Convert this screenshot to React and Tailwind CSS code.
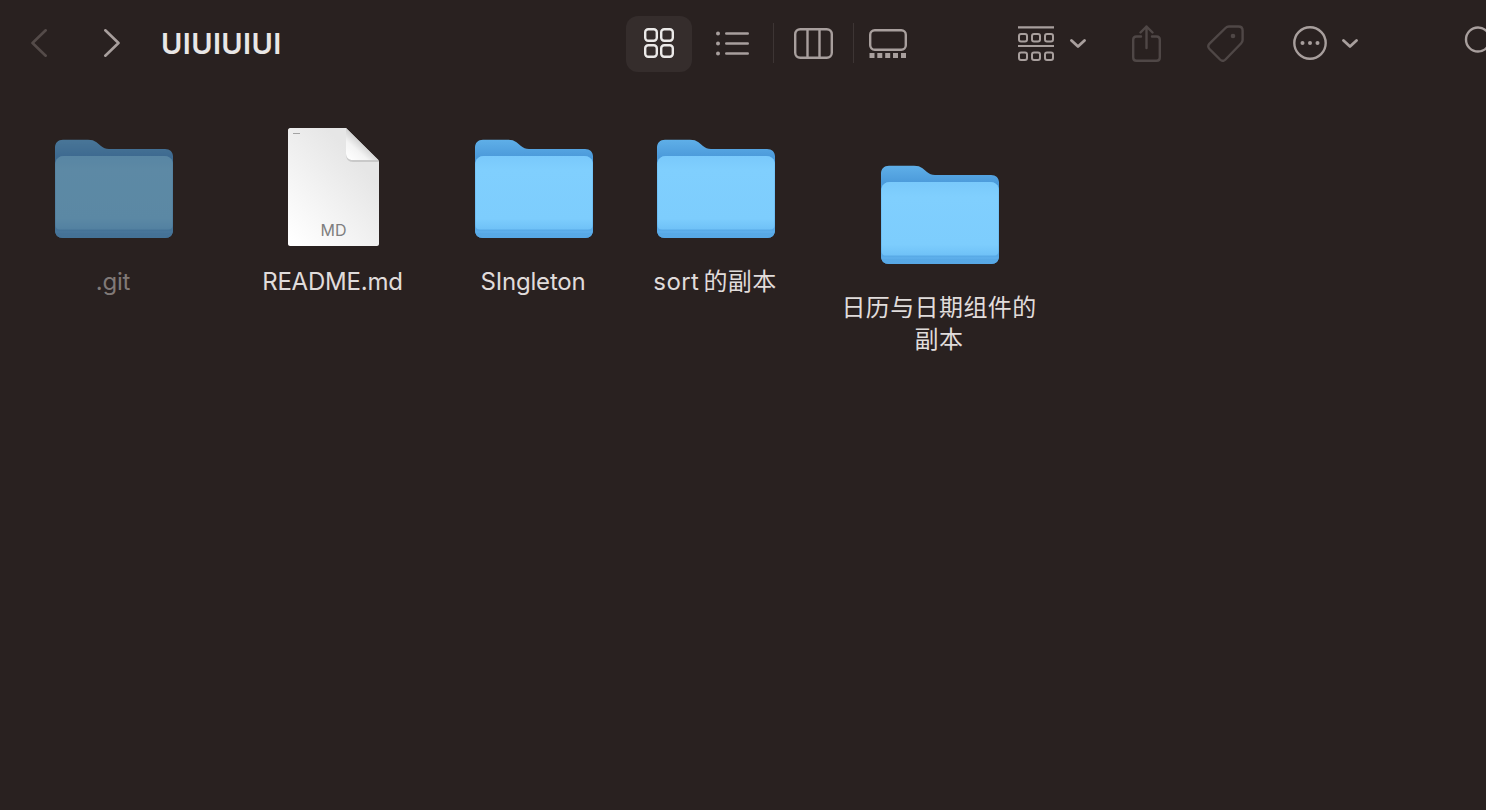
const dim = "#4f4746";
const mid = "#a89f9d";

const Folder = ({ uid, className = "" }) => (
  <svg width="118" height="99" viewBox="0 0 118 99" className={className}>
    <defs>
      <linearGradient id={`back-${uid}`} x1="0" y1="0" x2="0" y2="1">
        <stop offset="0" stopColor="#5fafe8" />
        <stop offset="0.17" stopColor="#4c9bdb" />
        <stop offset="1" stopColor="#4a98d9" />
      </linearGradient>
      <linearGradient id={`bottom-${uid}`} x1="0" y1="0" x2="0" y2="1">
        <stop offset="0" stopColor="#6cbff6" />
        <stop offset="1" stopColor="#57a8e5" />
      </linearGradient>
      <linearGradient id={`front-${uid}`} x1="0" y1="0" x2="0" y2="1">
        <stop offset="0" stopColor="#79c9fb" />
        <stop offset="0.2" stopColor="#80cffe" />
        <stop offset="0.85" stopColor="#7dcdfd" />
        <stop offset="1" stopColor="#6fc1f7" />
      </linearGradient>
    </defs>
    <path
      d="M8 0.700H33C37 0.700 39 1.500 41.500 3.200L46 7C48.500 9 50.500 10 54 10H110C115 10 118 13 118 17.500V91C118 96 115 99 110 99H8C3 99 0 96 0 91V8.700C0 3.700 3 0.700 8 0.700Z"
      fill={`url(#back-${uid})`}
    />
    <path
      d="M9 17H109C114 17 118 20 118 25V91C118 96 115 99 110 99H8C3 99 0 96 0 91V25C1 20 4 17 9 17Z"
      fill={`url(#bottom-${uid})`}
    />
    <path
      d="M9 17H109C114 17 117.500 20 117.500 25V86C117.500 89 116 90.500 113 90.500H5C2 90.500 0.500 89 0.500 86V25C0.500 20 4 17 9 17Z"
      fill={`url(#front-${uid})`}
    />
    <path d="M0.500 92.500H117.500V93.500H0.500Z" fill="#74c5fb" opacity="0.35" />
  </svg>
);

const FileIcon = () => (
  <div className="relative w-[91px] h-[118px]">
    <svg width="91" height="118" viewBox="0 0 91 118">
      <defs>
        <linearGradient id="page" x1="10" y1="118" x2="85" y2="50" gradientUnits="userSpaceOnUse">
          <stop offset="0" stopColor="#ffffff" />
          <stop offset="1" stopColor="#e6e6e6" />
        </linearGradient>
        <linearGradient id="fold" x1="60" y1="32" x2="76" y2="14" gradientUnits="userSpaceOnUse">
          <stop offset="0" stopColor="#ffffff" />
          <stop offset="0.55" stopColor="#f4f4f4" />
          <stop offset="1" stopColor="#cbcbcb" />
        </linearGradient>
      </defs>
      <path
        d="M2 0H58L91 33V116C91 117 90 118 89 118H2C1 118 0 117 0 116V2C0 1 1 0 2 0Z"
        fill="url(#page)"
      />
      <path d="M58 26C58 31 60.500 34 65 34H91V33L89 31.500H65C61 31.500 59 29 59 25Z" fill="#c9c9c9" />
      <path d="M58 0L90.500 32H65C60.500 32 58 29.500 58 25Z" fill="url(#fold)" />
      <rect x="5" y="5" width="7" height="1" fill="#a3a3a3" />
    </svg>
    <span className="absolute left-0 right-0 bottom-[7px] text-center text-[16px] leading-[18px] text-[#7f7f7f] font-['Inter',sans-serif]">
      MD
    </span>
  </div>
);

const Chevron = ({ dir, color }) => (
  <svg width="16" height="28" viewBox="0 0 16 28" fill="none" stroke={color} strokeWidth="2.600" strokeLinecap="round" strokeLinejoin="round">
    <path d={dir === "left" ? "M14.700 1.300L1.500 14L14.700 26.700" : "M1.300 1.300L14.500 14L1.300 26.700"} />
  </svg>
);

const SmallChevron = () => (
  <svg width="16" height="9" viewBox="0 0 16 9" fill="none" stroke={mid} strokeWidth="2.800" strokeLinecap="round" strokeLinejoin="round">
    <path d="M1.500 1.500L8 7.500L14.500 1.500" />
  </svg>
);

const Separator = ({ className }) => <div className={`w-[1px] h-[40px] bg-[#3d3534] ${className}`} />;

const GridIcon = () => (
  <svg width="30" height="30" viewBox="0 0 30 30" fill="none" stroke="#ebe9e8" strokeWidth="2.400">
    <rect x="1.200" y="1.200" width="11.600" height="11.600" rx="3" />
    <rect x="17.200" y="1.200" width="11.600" height="11.600" rx="3" />
    <rect x="1.200" y="17.200" width="11.600" height="11.600" rx="3" />
    <rect x="17.200" y="17.200" width="11.600" height="11.600" rx="3" />
  </svg>
);

const ListIcon = () => (
  <svg width="33" height="25" viewBox="0 0 33 25" fill={mid}>
    <circle cx="2" cy="2.500" r="2" />
    <circle cx="2" cy="12.500" r="2" />
    <circle cx="2" cy="22.500" r="2" />
    <rect x="9" y="1.200" width="24" height="2.600" rx="1.300" />
    <rect x="9" y="11.200" width="24" height="2.600" rx="1.300" />
    <rect x="9" y="21.200" width="24" height="2.600" rx="1.300" />
  </svg>
);

const ColumnsIcon = () => (
  <svg width="39" height="31" viewBox="0 0 39 31" fill="none" stroke={mid} strokeWidth="2.400">
    <rect x="1.200" y="1.200" width="36.600" height="28.600" rx="5" />
    <path d="M13.500 1.200V29.800M25.500 1.200V29.800" />
  </svg>
);

const GalleryIcon = () => (
  <svg width="38" height="29" viewBox="0 0 38 29" fill="none">
    <rect x="1.200" y="1.200" width="35.600" height="19.600" rx="4.500" stroke={mid} strokeWidth="2.400" />
    <g fill={mid}>
      <rect x="0.500" y="24" width="5" height="5" />
      <rect x="8.300" y="24" width="5" height="5" />
      <rect x="16.200" y="24" width="5" height="5" />
      <rect x="24" y="24" width="5" height="5" />
      <rect x="32" y="24" width="5" height="5" />
    </g>
  </svg>
);

const GroupIcon = () => (
  <svg width="36" height="35" viewBox="0 0 36 35" fill="none" stroke={mid} strokeWidth="2">
    <path d="M0 1.300H36M0 20H36" strokeWidth="2.200" />
    {[8, 26.500].map((y) =>
      [1, 14, 27].map((x) => <rect key={`${x}-${y}`} x={x} y={y} width="8" height="7.500" rx="2" />)
    )}
  </svg>
);

const ShareIcon = () => (
  <svg width="29" height="37" viewBox="0 0 29 37" fill="none" stroke={dim} strokeWidth="2.400" strokeLinecap="round" strokeLinejoin="round">
    <path d="M9 11.500H4.500C2.500 11.500 1.200 12.800 1.200 14.800V32.500C1.200 34.500 2.500 35.800 4.500 35.800H24.500C26.500 35.800 27.800 34.500 27.800 32.500V14.800C27.800 12.800 26.500 11.500 24.500 11.500H20" />
    <path d="M14.500 23V1.500M8.500 7.500L14.500 1.500L20.500 7.500" />
  </svg>
);

const TagIcon = () => (
  <svg width="37" height="37" viewBox="0 0 37 37" fill="none">
    <path
      d="M22 1.500H31.500C34 1.500 35.600 3 35.600 5.500V15C35.600 16.500 35 17.500 34 18.500L18.500 34.500C16.800 36.200 14.800 36.200 13 34.500L2.500 24C0.800 22.300 0.800 20.300 2.500 18.600L18.500 3C19.500 2 20.500 1.500 22 1.500Z"
      stroke={dim}
      strokeWidth="2.400"
    />
    <circle cx="26" cy="11" r="2.300" fill={dim} />
  </svg>
);

const MoreIcon = () => (
  <svg width="34" height="34" viewBox="0 0 34 34">
    <circle cx="17" cy="17" r="15.700" fill="none" stroke={mid} strokeWidth="2.400" />
    <circle cx="9.500" cy="17" r="2" fill={mid} />
    <circle cx="17" cy="17" r="2" fill={mid} />
    <circle cx="24.500" cy="17" r="2" fill={mid} />
  </svg>
);

const SearchIcon = () => (
  <svg width="40" height="40" viewBox="0 0 40 40" fill="none" stroke={mid} strokeWidth="2.400" strokeLinecap="round">
    <circle cx="15" cy="16.500" r="12" />
    <path d="M24 25L33 35" />
  </svg>
);

const Item = ({ width, label, children, dimmed, cjk, className = "" }) => (
  <div className={`shrink-0 flex flex-col items-center ${className}`} style={{ width }}>
    <div className="h-[118px]">{children}</div>
    <div
      className={`mt-[20px] w-[200px] pr-[2px] text-center text-[24px] leading-[32px] ${
        cjk ? "tracking-[0.4px] [word-spacing:-3px]" : "tracking-[-0.2px]"
      } ${dimmed ? "text-[#807977]" : "text-[#e0dcdb]"}`}
    >
      {label}
    </div>
  </div>
);

export default function App() {
  return (
    <div className="w-[1486px] h-[810px] overflow-hidden bg-[#292120] font-['Inter','Noto_Sans_CJK_SC',sans-serif]">
      <div className="h-[86px] flex items-center pl-[31px] *:shrink-0">
        <Chevron dir="left" color="#544b49" />
        <div className="ml-[57px]">
          <Chevron dir="right" color="#a89f9d" />
        </div>
        <div className="ml-[41px] w-[465px] pt-[1px] text-[29px] leading-[34px] font-semibold tracking-[0.4px] text-[#e9e7e6]">
          UIUIUIUI
        </div>
        <div className="w-[66px] h-[56px] mt-[2px] pb-[2px] rounded-[12px] bg-[#352d2c] flex items-center justify-center">
          <GridIcon />
        </div>
        <div className="ml-[24px]"><ListIcon /></div>
        <Separator className="ml-[24px]" />
        <div className="ml-[20px]"><ColumnsIcon /></div>
        <Separator className="ml-[20px]" />
        <div className="ml-[15px]"><GalleryIcon /></div>
        <div className="ml-[111px]"><GroupIcon /></div>
        <div className="ml-[16px]"><SmallChevron /></div>
        <div className="ml-[46px]"><ShareIcon /></div>
        <div className="ml-[46px]"><TagIcon /></div>
        <div className="ml-[49px]"><MoreIcon /></div>
        <div className="ml-[15px]"><SmallChevron /></div>
        <div className="ml-[105px]"><SearchIcon /></div>
      </div>

      <div className="flex items-start pt-[42px]">
        <Item width={228} label=".git" dimmed>
          <Folder uid="git" className="mt-[11px] opacity-60" />
        </Item>
        <Item width={211} label="README.md">
          <FileIcon />
        </Item>
        <Item width={190} label="SIngleton">
          <Folder uid="singleton" className="mt-[11px]" />
        </Item>
        <Item width={174} label="sort 的副本" cjk>
          <Folder uid="sort" className="mt-[11px]" />
        </Item>
        <Item width={274} label="日历与日期组件的副本" cjk className="mt-[26px]">
          <Folder uid="calendar" className="mt-[11px]" />
        </Item>
      </div>
    </div>
  );
}
